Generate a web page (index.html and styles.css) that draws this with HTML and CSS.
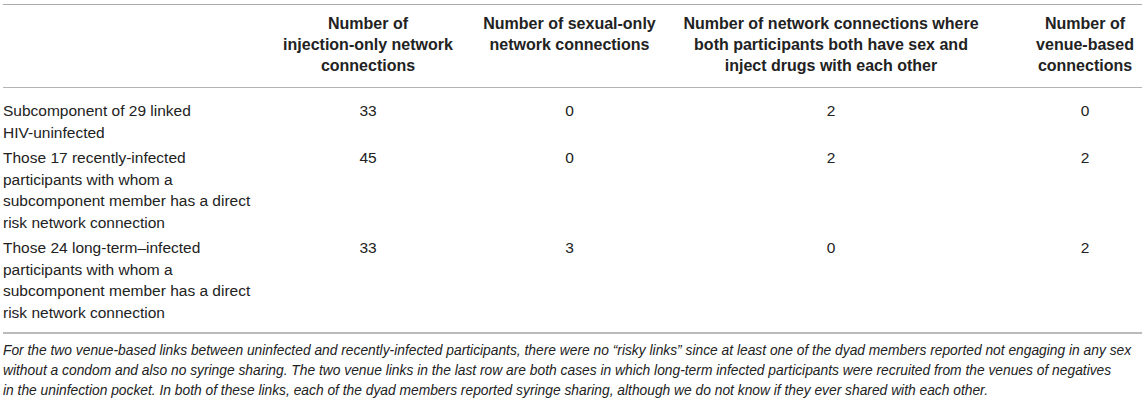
FILE: index.html
```html
<!DOCTYPE html>
<html lang="en">
  <head>
    <meta charset="UTF-8" />
    <title>Network connections by subgroup</title>
    <link rel="stylesheet" href="styles.css">
  </head>
  <body>
    <div class="table-wrap">
      <table class="data-table">
        <colgroup>
          <col class="col-group" />
          <col class="col-inject" />
          <col class="col-sex" />
          <col class="col-both" />
          <col class="col-venue" />
        </colgroup>
        <thead>
          <tr>
            <th class="c1"></th>
            <th class="c2">Number of <span class="nowrap">injection-only network</span> connections</th>
            <th class="c3">Number of sexual-only network connections</th>
            <th class="c4">Number of network connections where both participants both have sex and inject drugs with each other</th>
            <th class="c5">Number of <span class="nowrap">venue-based</span> connections</th>
          </tr>
        </thead>
        <tbody>
          <tr>
            <td class="c1">Subcomponent of 29 linked <span class="nowrap">HIV-uninfected</span></td>
            <td class="c2">33</td>
            <td class="c3">0</td>
            <td class="c4">2</td>
            <td class="c5">0</td>
          </tr>
          <tr>
            <td class="c1">Those 17 recently-infected participants with whom a subcomponent member has a direct risk network connection</td>
            <td class="c2">45</td>
            <td class="c3">0</td>
            <td class="c4">2</td>
            <td class="c5">2</td>
          </tr>
          <tr>
            <td class="c1">Those 24 long-term–infected participants with whom a subcomponent member has a direct risk network connection</td>
            <td class="c2">33</td>
            <td class="c3">3</td>
            <td class="c4">0</td>
            <td class="c5">2</td>
          </tr>
        </tbody>
      </table>

      <!-- Table footnote, line breaks kept as in the printed table -->
      <p class="table-note">
        For the two venue-based links between uninfected and recently-infected participants, there were no “risky links” since at least one of the dyad members reported not engaging in any sex<br>
        without a condom and also no syringe sharing. The two venue links in the last row are both cases in which long-term infected participants were recruited from the venues of negatives<br>
        in the uninfection pocket. In both of these links, each of the dyad members reported syringe sharing, although we do not know if they ever shared with each other.
      </p>
    </div>
  </body>
</html>
```

FILE: styles.css
```css
/* Plain journal-style data table */
body {
  margin: 0;
  background-color: #fff;
  color: #222;
  font-family: "Liberation Sans", Arial, sans-serif;
}

.table-wrap {
  padding: 4px 3px 0 3px;
}

.data-table {
  width: 1139px;
  table-layout: fixed;
  border-collapse: collapse;
  font-size: 15.5px;
}

.col-group { width: 266px; }
.col-inject { width: 195px; }
.col-sex { width: 211px; }
.col-both { width: 312px; }
.col-venue { width: 155px; }

.data-table thead tr {
  border-top: 1px solid #aaa;
  border-bottom: 1px solid #b4b4b4;
}

.data-table tbody {
  border-bottom: 2px solid #bbb;
}

.data-table th {
  font-size: 16px;
  font-weight: bold;
  line-height: 21px;
  text-align: center;
  vertical-align: top;
  padding: 8px 6px 11px 6px;
}

.data-table td {
  line-height: 21.5px;
  text-align: center;
  vertical-align: top;
  padding: 2px 6px;
}

.data-table tbody tr:first-child td {
  padding-top: 12px;
}

.data-table tbody tr:last-child td {
  padding-bottom: 9px;
}

/* first column holds the row labels */
.data-table .c1 {
  text-align: left;
  padding-left: 0;
  padding-right: 8px;
}

.data-table .c2 {
  padding-left: 9px;
  padding-right: 6px;
}

.data-table .c5 {
  padding-left: 44px;
  padding-right: 3px;
}

.nowrap {
  white-space: nowrap;
}

.table-note {
  margin: 7px 0 0 0;
  font-size: 13.8px;
  font-style: italic;
  line-height: 20px;
  white-space: nowrap;
}
```
